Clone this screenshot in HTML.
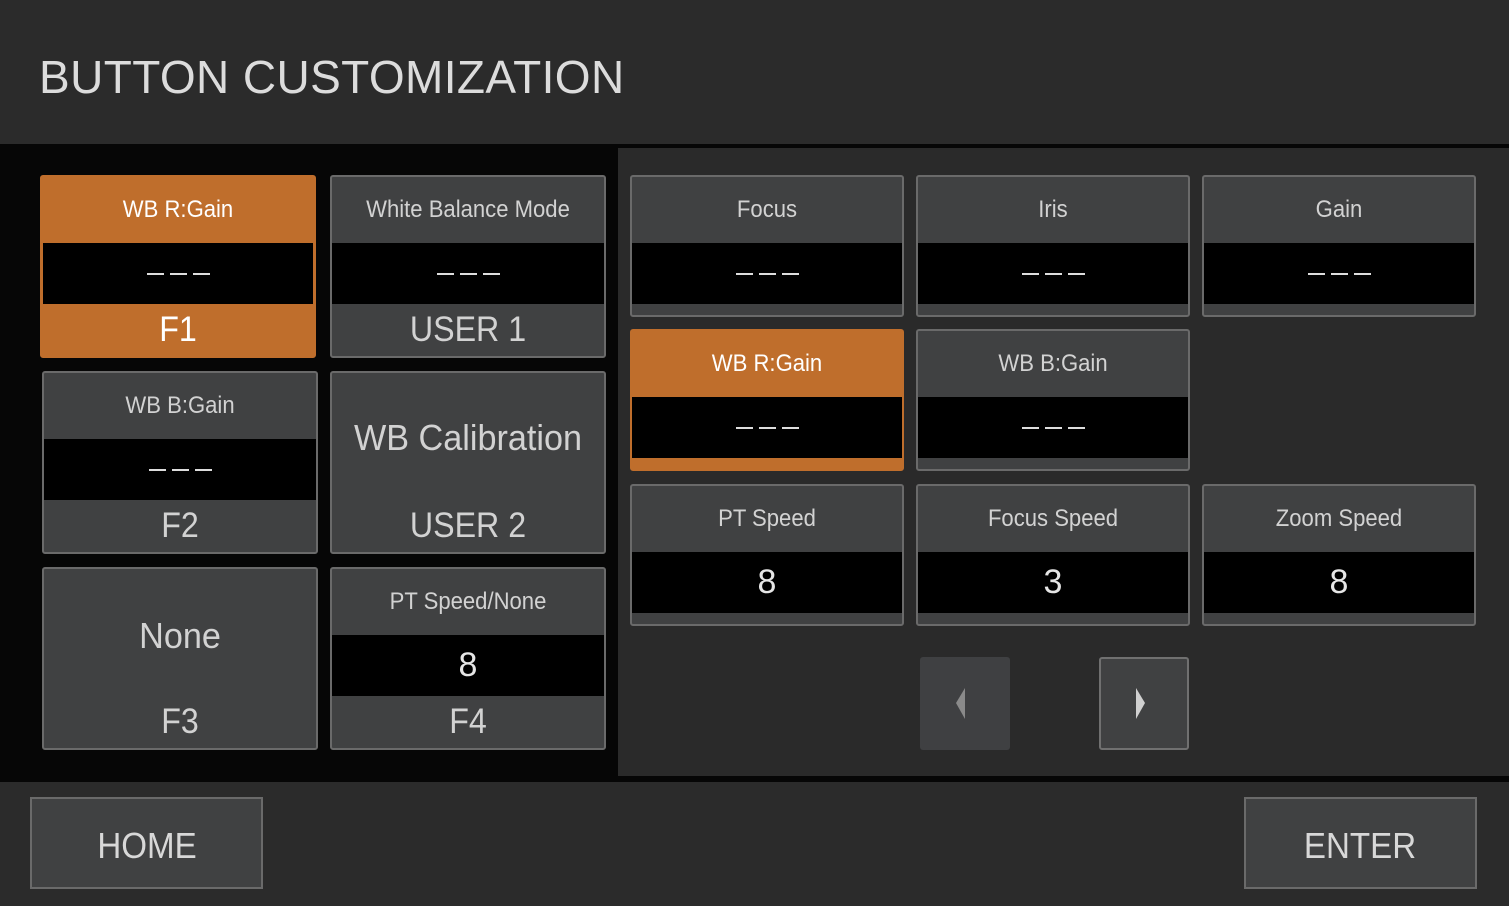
<!DOCTYPE html>
<html><head><meta charset="utf-8"><style>
*{margin:0;padding:0;box-sizing:border-box}
body{width:1509px;height:906px;background:#2b2b2b;position:relative;overflow:hidden;font-family:"Liberation Sans",sans-serif;color:#d2d2d2}
.a{position:absolute}
.title{left:39px;top:50px;font-size:46px;color:#dcdcdc;letter-spacing:0.4px}
.card{position:absolute;background:#404142;border:2px solid #6a6a6a;border-radius:3px;overflow:hidden}
.card.o{background:#bf6e2c;border-color:#bf6e2c}
.hd{position:absolute;left:0;right:0;top:0;height:66px;display:flex;align-items:center;justify-content:center;font-size:24px;transform:scaleX(0.92)}
.bk{position:absolute;left:0;right:0;top:66px;height:61px;background:#000;display:flex;align-items:center;justify-content:center;font-size:34px;color:#e6e6e6}
.ft{position:absolute;left:0;right:0;top:127px;bottom:0;display:flex;align-items:center;justify-content:center;font-size:35px;transform:scaleX(0.92)}
.o .hd,.o .ft{color:#fff}
.d{display:flex;gap:6px}.d i{display:block;width:17px;height:2px;background:#ddd}
.btn{position:absolute;background:#404142;border:2px solid #6a6a6a;display:flex;align-items:center;justify-content:center;font-size:36px;color:#d8d8d8}
.btn span{transform:scaleX(0.92);display:block;padding-top:6px}
</style></head><body>
<div class="a title">BUTTON CUSTOMIZATION</div>
<div class="a" style="left:0;top:144px;width:618px;height:636px;background:#060606"></div>
<div class="a" style="left:618px;top:144px;width:891px;height:4px;background:#060606"></div>
<div class="a" style="left:618px;top:148px;width:891px;height:628px;background:#2a2a2a"></div>
<div class="a" style="left:0;top:776px;width:1509px;height:6px;background:#060606"></div>

<div class="card o" style="left:40px;top:175px;width:276px;height:183px"><div class="hd">WB R:Gain</div><div class="bk" style="left:1px;right:1px"><div class="d"><i></i><i></i><i></i></div></div><div class="ft">F1</div></div>
<div class="card" style="left:330px;top:175px;width:276px;height:183px"><div class="hd">White Balance Mode</div><div class="bk"><div class="d"><i></i><i></i><i></i></div></div><div class="ft">USER 1</div></div>
<div class="card" style="left:42px;top:371px;width:276px;height:183px"><div class="hd">WB B:Gain</div><div class="bk"><div class="d"><i></i><i></i><i></i></div></div><div class="ft">F2</div></div>
<div class="card" style="left:330px;top:371px;width:276px;height:183px"><div class="a" style="left:0;right:0;top:44px;text-align:center;font-size:36px;transform:scaleX(0.95)">WB Calibration</div><div class="ft">USER 2</div></div>
<div class="card" style="left:42px;top:567px;width:276px;height:183px"><div class="a" style="left:0;right:0;top:46px;text-align:center;font-size:36px;transform:scaleX(0.95)">None</div><div class="ft">F3</div></div>
<div class="card" style="left:330px;top:567px;width:276px;height:183px"><div class="hd">PT Speed/None</div><div class="bk">8</div><div class="ft">F4</div></div>

<div class="card" style="left:630px;top:175px;width:274px;height:142px"><div class="hd">Focus</div><div class="bk"><div class="d"><i></i><i></i><i></i></div></div></div>
<div class="card" style="left:916px;top:175px;width:274px;height:142px"><div class="hd">Iris</div><div class="bk"><div class="d"><i></i><i></i><i></i></div></div></div>
<div class="card" style="left:1202px;top:175px;width:274px;height:142px"><div class="hd">Gain</div><div class="bk"><div class="d"><i></i><i></i><i></i></div></div></div>
<div class="card o" style="left:630px;top:329px;width:274px;height:142px"><div class="hd">WB R:Gain</div><div class="bk"><div class="d"><i></i><i></i><i></i></div></div></div>
<div class="card" style="left:916px;top:329px;width:274px;height:142px"><div class="hd">WB B:Gain</div><div class="bk"><div class="d"><i></i><i></i><i></i></div></div></div>
<div class="card" style="left:630px;top:484px;width:274px;height:142px"><div class="hd">PT Speed</div><div class="bk">8</div></div>
<div class="card" style="left:916px;top:484px;width:274px;height:142px"><div class="hd">Focus Speed</div><div class="bk">3</div></div>
<div class="card" style="left:1202px;top:484px;width:274px;height:142px"><div class="hd">Zoom Speed</div><div class="bk">8</div></div>

<div class="a" style="left:920px;top:657px;width:90px;height:93px;background:#3f4042;border-radius:3px"><svg class="a" style="left:36px;top:31px" width="10" height="32"><path d="M9 0 L0 15 L9 31 Z" fill="#8a8a8a"/></svg></div>
<div class="a" style="left:1099px;top:657px;width:90px;height:93px;background:#404142;border:2px solid #707070;border-radius:3px"><svg class="a" style="left:35px;top:29px" width="10" height="32"><path d="M0 0 L9 15 L0 31 Z" fill="#d0d0d0"/></svg></div>

<div class="btn" style="left:30px;top:797px;width:233px;height:92px"><span>HOME</span></div>
<div class="btn" style="left:1244px;top:797px;width:233px;height:92px"><span>ENTER</span></div>
</body></html>
